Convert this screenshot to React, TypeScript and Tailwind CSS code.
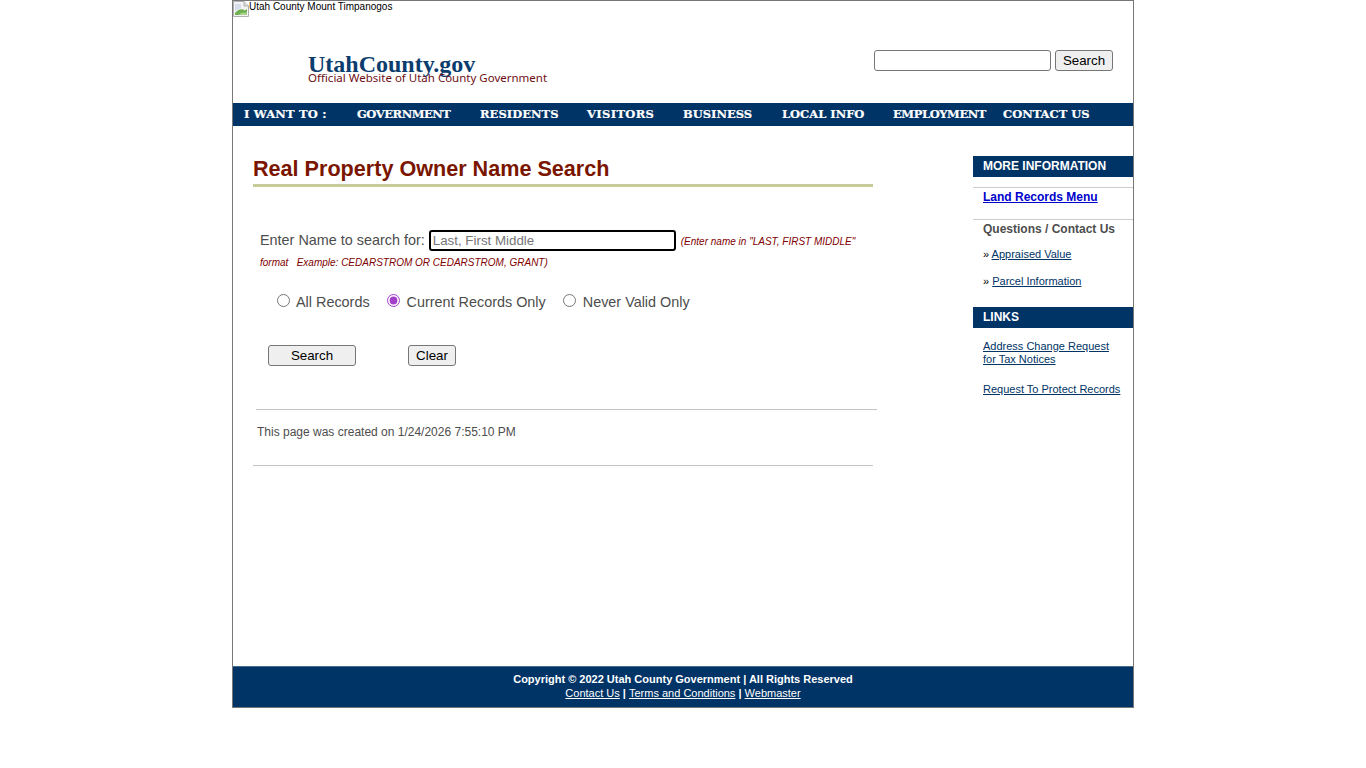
const NAV = [
  { t: "I WANT TO :", w: "w-[113px] tracking-[0.2px]" },
  { t: "GOVERNMENT", w: "w-[123px] tracking-[-0.45px]" },
  { t: "RESIDENTS", w: "w-[107px] tracking-[0.05px]" },
  { t: "VISITORS", w: "w-[96px] tracking-[0.35px]" },
  { t: "BUSINESS", w: "w-[99px]" },
  { t: "LOCAL INFO", w: "w-[111px]" },
  { t: "EMPLOYMENT", w: "w-[110px] tracking-[-0.4px]" },
  { t: "CONTACT US", w: "w-[100px]" },
];

function BrokenImage() {
  return (
    <svg width="16" height="16" viewBox="0 0 16 16" className="shrink-0">
      <path d="M0.5 0.5H11L15.5 5V15.5H0.5Z" fill="#f4f4f4" stroke="#b0b0b0" />
      <path d="M11 0.5V5H15.5" fill="#dcdcdc" stroke="#b0b0b0" />
      <path d="M2 3H8V7L2 10Z" fill="#d5deea" />
      <path d="M2 14V12C5 8 9 7 12 9.5L14 8V14Z" fill="#6fb053" />
      <path d="M6 14C8 11.5 10 11 12 12L14 11V14Z" fill="#a8d48f" />
    </svg>
  );
}

export default function App() {
  return (
    <div className="w-[902px] h-[708px] ml-[232px] border border-[#777] bg-white flex flex-col font-['Liberation_Sans',Arial,sans-serif]">
      <div className="h-[102px] flex justify-between shrink-0">
        <div className="flex flex-col">
          <div className="flex h-[16px] items-start">
            <BrokenImage />
            <span className="text-[10px] leading-[12px] text-black">Utah County Mount Timpanogos</span>
          </div>
          <div className="ml-[75px] mt-[33px] font-['Liberation_Serif',serif] font-bold text-[24px] leading-[28px] text-[#0b3c6e]">
            UtahCounty.gov
          </div>
          <div className="ml-[75px] mt-[-7px] font-['Noto_Sans',sans-serif] text-[11.5px] leading-[14px] text-[#6e0f14]">
            Official Website of Utah County Government
          </div>
        </div>
        <div className="flex items-start gap-[4px] mt-[49px] mr-[20px]">
          <input type="text" className="w-[177px] h-[21px] border border-[#767676] rounded-[3px] bg-white" />
          <button className="w-[58px] h-[21px] border border-[#767676] rounded-[3px] bg-[#efefef] text-[13.33px] leading-[18px] text-black">Search</button>
        </div>
      </div>

      <div className="h-[23px] bg-[#003366] flex items-center pl-[11px] shrink-0">
        {NAV.map((n) => (
          <span key={n.t} className={`${n.w} font-['DejaVu_Serif',serif] font-bold text-[11.5px] leading-[20px] pb-[2px] text-white whitespace-nowrap [-webkit-text-stroke:0.2px_#fff]`}>
            {n.t}
          </span>
        ))}
      </div>

      <div className="flex-1 flex justify-between">
        <div className="w-[640px] pl-[20px] flex flex-col">
          <h1 className="mt-[28px] w-[620px] h-[33px] border-b-[3px] border-[#c9cc99] text-[21.6px] leading-[29px] font-bold text-[#7a1500] whitespace-nowrap">
            Real Property Owner Name Search
          </h1>
          <div className="mt-[42px] ml-[7px] w-[605px] text-[14.4px] leading-[21px] text-[#4d4d4d]">
            <div className="flex items-center h-[22px]">
              <span className="mr-[4px] whitespace-nowrap">Enter Name to search for:</span>
              <input
                type="text"
                placeholder="Last, First Middle"
                className="w-[247px] h-[21px] px-[2px] border-2 border-black rounded-[3px] text-[13.33px] placeholder:text-[#757575] bg-white"
              />
              <span className="ml-[5px] mt-[2px] text-[10px] italic text-[#800000] whitespace-nowrap">
                (Enter name in "LAST, FIRST MIDDLE"
              </span>
            </div>
            <div className="mt-[1px] text-[10px] leading-[21px] italic text-[#800000] whitespace-pre">
              {'format   Example: CEDARSTROM OR CEDARSTROM, GRANT)'}
            </div>
          </div>
          <div className="mt-[17px] ml-[24px] flex items-center h-[24px] text-[14.4px] leading-[21px] text-[#4d4d4d]">
            <input type="radio" name="r" className="w-[13px] h-[13px] mr-[6px] mb-[4px] accent-[#a43fc9]" />
            <span className="mr-[17px]">All Records</span>
            <input type="radio" name="r" defaultChecked className="w-[13px] h-[13px] mr-[7px] mb-[4px] accent-[#a43fc9]" />
            <span className="mr-[17px]">Current Records Only</span>
            <input type="radio" name="r" className="w-[13px] h-[13px] mr-[7px] mb-[4px] accent-[#a43fc9]" />
            <span>Never Valid Only</span>
          </div>
          <div className="mt-[31px] ml-[15px] flex">
            <button className="w-[88px] h-[21px] border border-[#767676] rounded-[3px] bg-[#efefef] text-[13.33px] leading-[18px] text-black">Search</button>
            <button className="ml-[52px] w-[48px] h-[21px] border border-[#767676] rounded-[3px] bg-[#efefef] text-[13.33px] leading-[18px] text-black">Clear</button>
          </div>
          <div className="mt-[43px] ml-[3px] w-[621px] border-t border-[#c4c4c4]" />
          <div className="mt-[15px] ml-[4px] text-[12px] leading-[14px] text-[#4d4d4d]">
            This page was created on 1/24/2026 7:55:10 PM
          </div>
          <div className="mt-[26px] w-[620px] border-t border-[#c4c4c4]" />
        </div>

        <div className="w-[160px] pt-[30px] flex flex-col text-[#4d4d4d]">
          <div className="h-[21px] bg-[#003366] pl-[10px] text-[12px] leading-[20px] font-bold text-white">MORE INFORMATION</div>
          <div className="mt-[10px] h-[33px] border-t border-b border-[#cccccc] pl-[10px] pt-[2px] text-[12px] leading-[15px] font-bold">
            <a href="#" className="text-[#0000cc] underline">Land Records Menu</a>
          </div>
          <div className="mt-[2px] pl-[10px] text-[12px] leading-[15px] font-bold">Questions / Contact Us</div>
          <div className="mt-[11px] pl-[10px] text-[11px] leading-[13px] text-black">
            » <a href="#" className="text-[#003366] underline">Appraised Value</a>
          </div>
          <div className="mt-[14px] pl-[10px] text-[11px] leading-[13px] text-black">
            » <a href="#" className="text-[#003366] underline">Parcel Information</a>
          </div>
          <div className="mt-[19px] h-[21px] bg-[#003366] pl-[10px] text-[12px] leading-[20px] font-bold text-white">LINKS</div>
          <a href="#" className="mt-[12px] ml-[10px] text-[11px] leading-[13px] text-[#003366] underline">
            Address Change Request<br />for Tax Notices
          </a>
          <a href="#" className="mt-[17px] ml-[10px] text-[11px] leading-[13px] text-[#003366] underline whitespace-nowrap">
            Request To Protect Records
          </a>
        </div>
      </div>

      <div className="h-[41px] bg-[#003366] border-t border-[#4a6a8a] shrink-0 flex flex-col items-center pt-[5px] text-[11px] leading-[14px] font-bold text-white">
        <div>Copyright © 2022 Utah County Government | All Rights Reserved</div>
        <div>
          <a href="#" className="underline font-normal">Contact Us</a> | <a href="#" className="underline font-normal">Terms and Conditions</a> | <a href="#" className="underline font-normal">Webmaster</a>
        </div>
      </div>
    </div>
  );
}
